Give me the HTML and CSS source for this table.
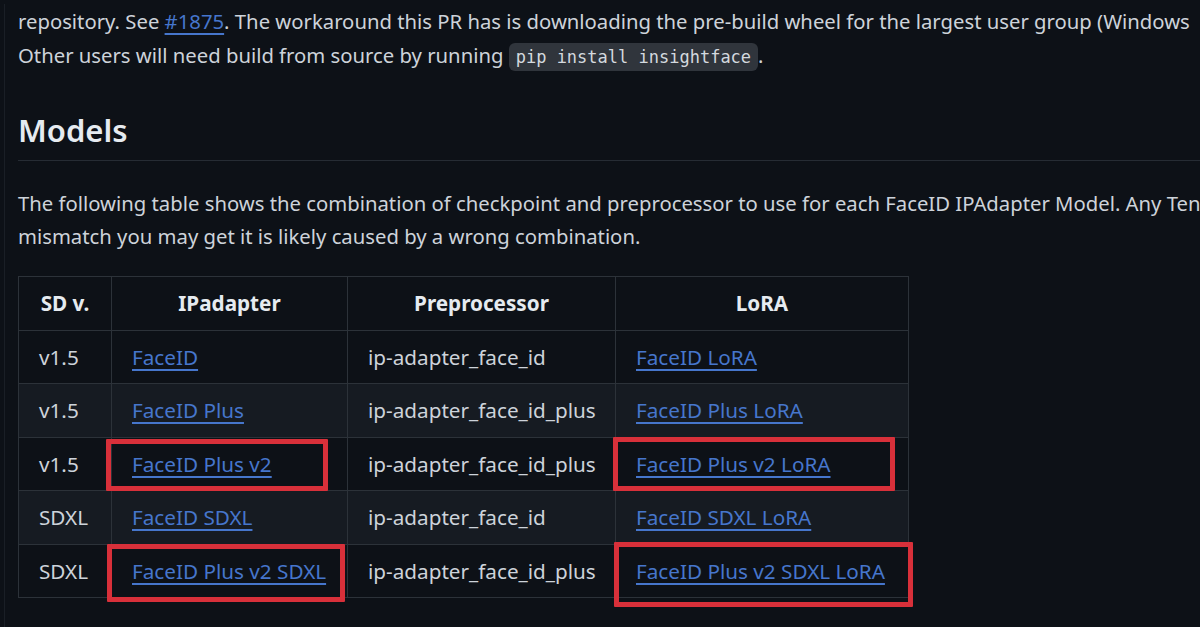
FILE: index.html
```html
<!DOCTYPE html>
<html lang="en">
<head>
<meta charset="utf-8">
<title>Models</title>
<link rel="stylesheet" href="styles.css">
</head>
<body>
<div class="page">
  <p class="intro">
    <span class="line">repository. See <a href="#">#1875</a>. The workaround this PR has is downloading the pre-build wheel for the largest user group (Windows</span>
    <span class="line">Other users will need build from source by running <code>pip install insightface</code>.</span>
  </p>

  <h2 class="heading">Models</h2>

  <p class="text">
    <span class="line">The following table shows the combination of checkpoint and preprocessor to use for each FaceID IPAdapter Model. Any Tensor</span>
    <span class="line">mismatch you may get it is likely caused by a wrong combination.</span>
  </p>

  <div class="table-wrap">
    <table class="models">
      <colgroup>
        <col class="c1"><col class="c2"><col class="c3"><col class="c4">
      </colgroup>
      <thead>
        <tr><th>SD v.</th><th>IPadapter</th><th>Preprocessor</th><th>LoRA</th></tr>
      </thead>
      <tbody>
        <tr><td>v1.5</td><td><a href="#">FaceID</a></td><td>ip-adapter_face_id</td><td><a href="#">FaceID LoRA</a></td></tr>
        <tr><td>v1.5</td><td><a href="#">FaceID Plus</a></td><td>ip-adapter_face_id_plus</td><td><a href="#">FaceID Plus LoRA</a></td></tr>
        <tr><td>v1.5</td><td><a href="#">FaceID Plus v2</a></td><td>ip-adapter_face_id_plus</td><td><a href="#">FaceID Plus v2 LoRA</a></td></tr>
        <tr><td>SDXL</td><td><a href="#">FaceID SDXL</a></td><td>ip-adapter_face_id</td><td><a href="#">FaceID SDXL LoRA</a></td></tr>
        <tr><td>SDXL</td><td><a href="#">FaceID Plus v2 SDXL</a></td><td>ip-adapter_face_id_plus</td><td><a href="#">FaceID Plus v2 SDXL LoRA</a></td></tr>
      </tbody>
    </table>
    <div class="mark mark-1"></div>
    <div class="mark mark-2"></div>
    <div class="mark mark-3"></div>
    <div class="mark mark-4"></div>
  </div>
</div>
</body>
</html>
```

FILE: styles.css
```css
html, body {
  margin: 0;
  padding: 0;
  background: #0d1117;
  overflow: hidden;
  width: 1200px;
  height: 627px;
}

body {
  font-family: "Noto Sans", "Open Sans", sans-serif;
  font-size: 20.3px;
  color: #cdd3da;
}

.page {
  width: 1400px;
  margin-left: 4px;
  padding-left: 13px;
  border-left: 1px solid #1a1f26;
  min-height: 627px;
}

.line {
  display: block;
  white-space: nowrap;
}

.intro {
  margin: 4px 0 0;
  line-height: 34px;
}

a {
  color: #4676cc;
  text-decoration: underline;
  text-underline-offset: 4px;
  text-decoration-thickness: 2px;
}

code {
  font-family: "DejaVu Sans Mono", "Liberation Mono", monospace;
  font-size: 17px;
  background: #30353c;
  color: #d4d9df;
  border-radius: 6px;
  padding: 4px 7px;
}

.heading {
  margin: 36px 0 0;
  font-size: 31px;
  font-weight: 600;
  line-height: 40px;
  color: #e6ebf0;
  padding-bottom: 10px;
  border-bottom: 1px solid #262c34;
}

.text {
  margin: 26px 0 0;
  line-height: 33px;
}

.table-wrap {
  position: relative;
  margin-top: 23px;
  width: 890px;
}

.models {
  border-collapse: collapse;
  table-layout: fixed;
  width: 890px;
  font-size: 20.7px;
}

.c1 { width: 93px; }
.c2 { width: 236px; }
.c3 { width: 268px; }
.c4 { width: 293px; }

.models th,
.models td {
  border: 1px solid #2c3239;
  padding: 10px 20px;
  line-height: 32.5px;
  white-space: nowrap;
  text-align: left;
}

.models th {
  text-align: center;
  font-weight: 700;
  color: #e6ebf0;
}

.models tbody tr:nth-child(2n) {
  background: #161b22;
}

.mark {
  position: absolute;
  border: 5px solid #d8303a;
  box-sizing: border-box;
  border-radius: 1px;
}

.mark-1 { left: 88px;  top: 163px; width: 222px; height: 52px; }
.mark-2 { left: 595px; top: 161px; width: 282px; height: 54px; }
.mark-3 { left: 89px;  top: 268px; width: 238px; height: 58px; }
.mark-4 { left: 596px; top: 266px; width: 299px; height: 65px; }
```
